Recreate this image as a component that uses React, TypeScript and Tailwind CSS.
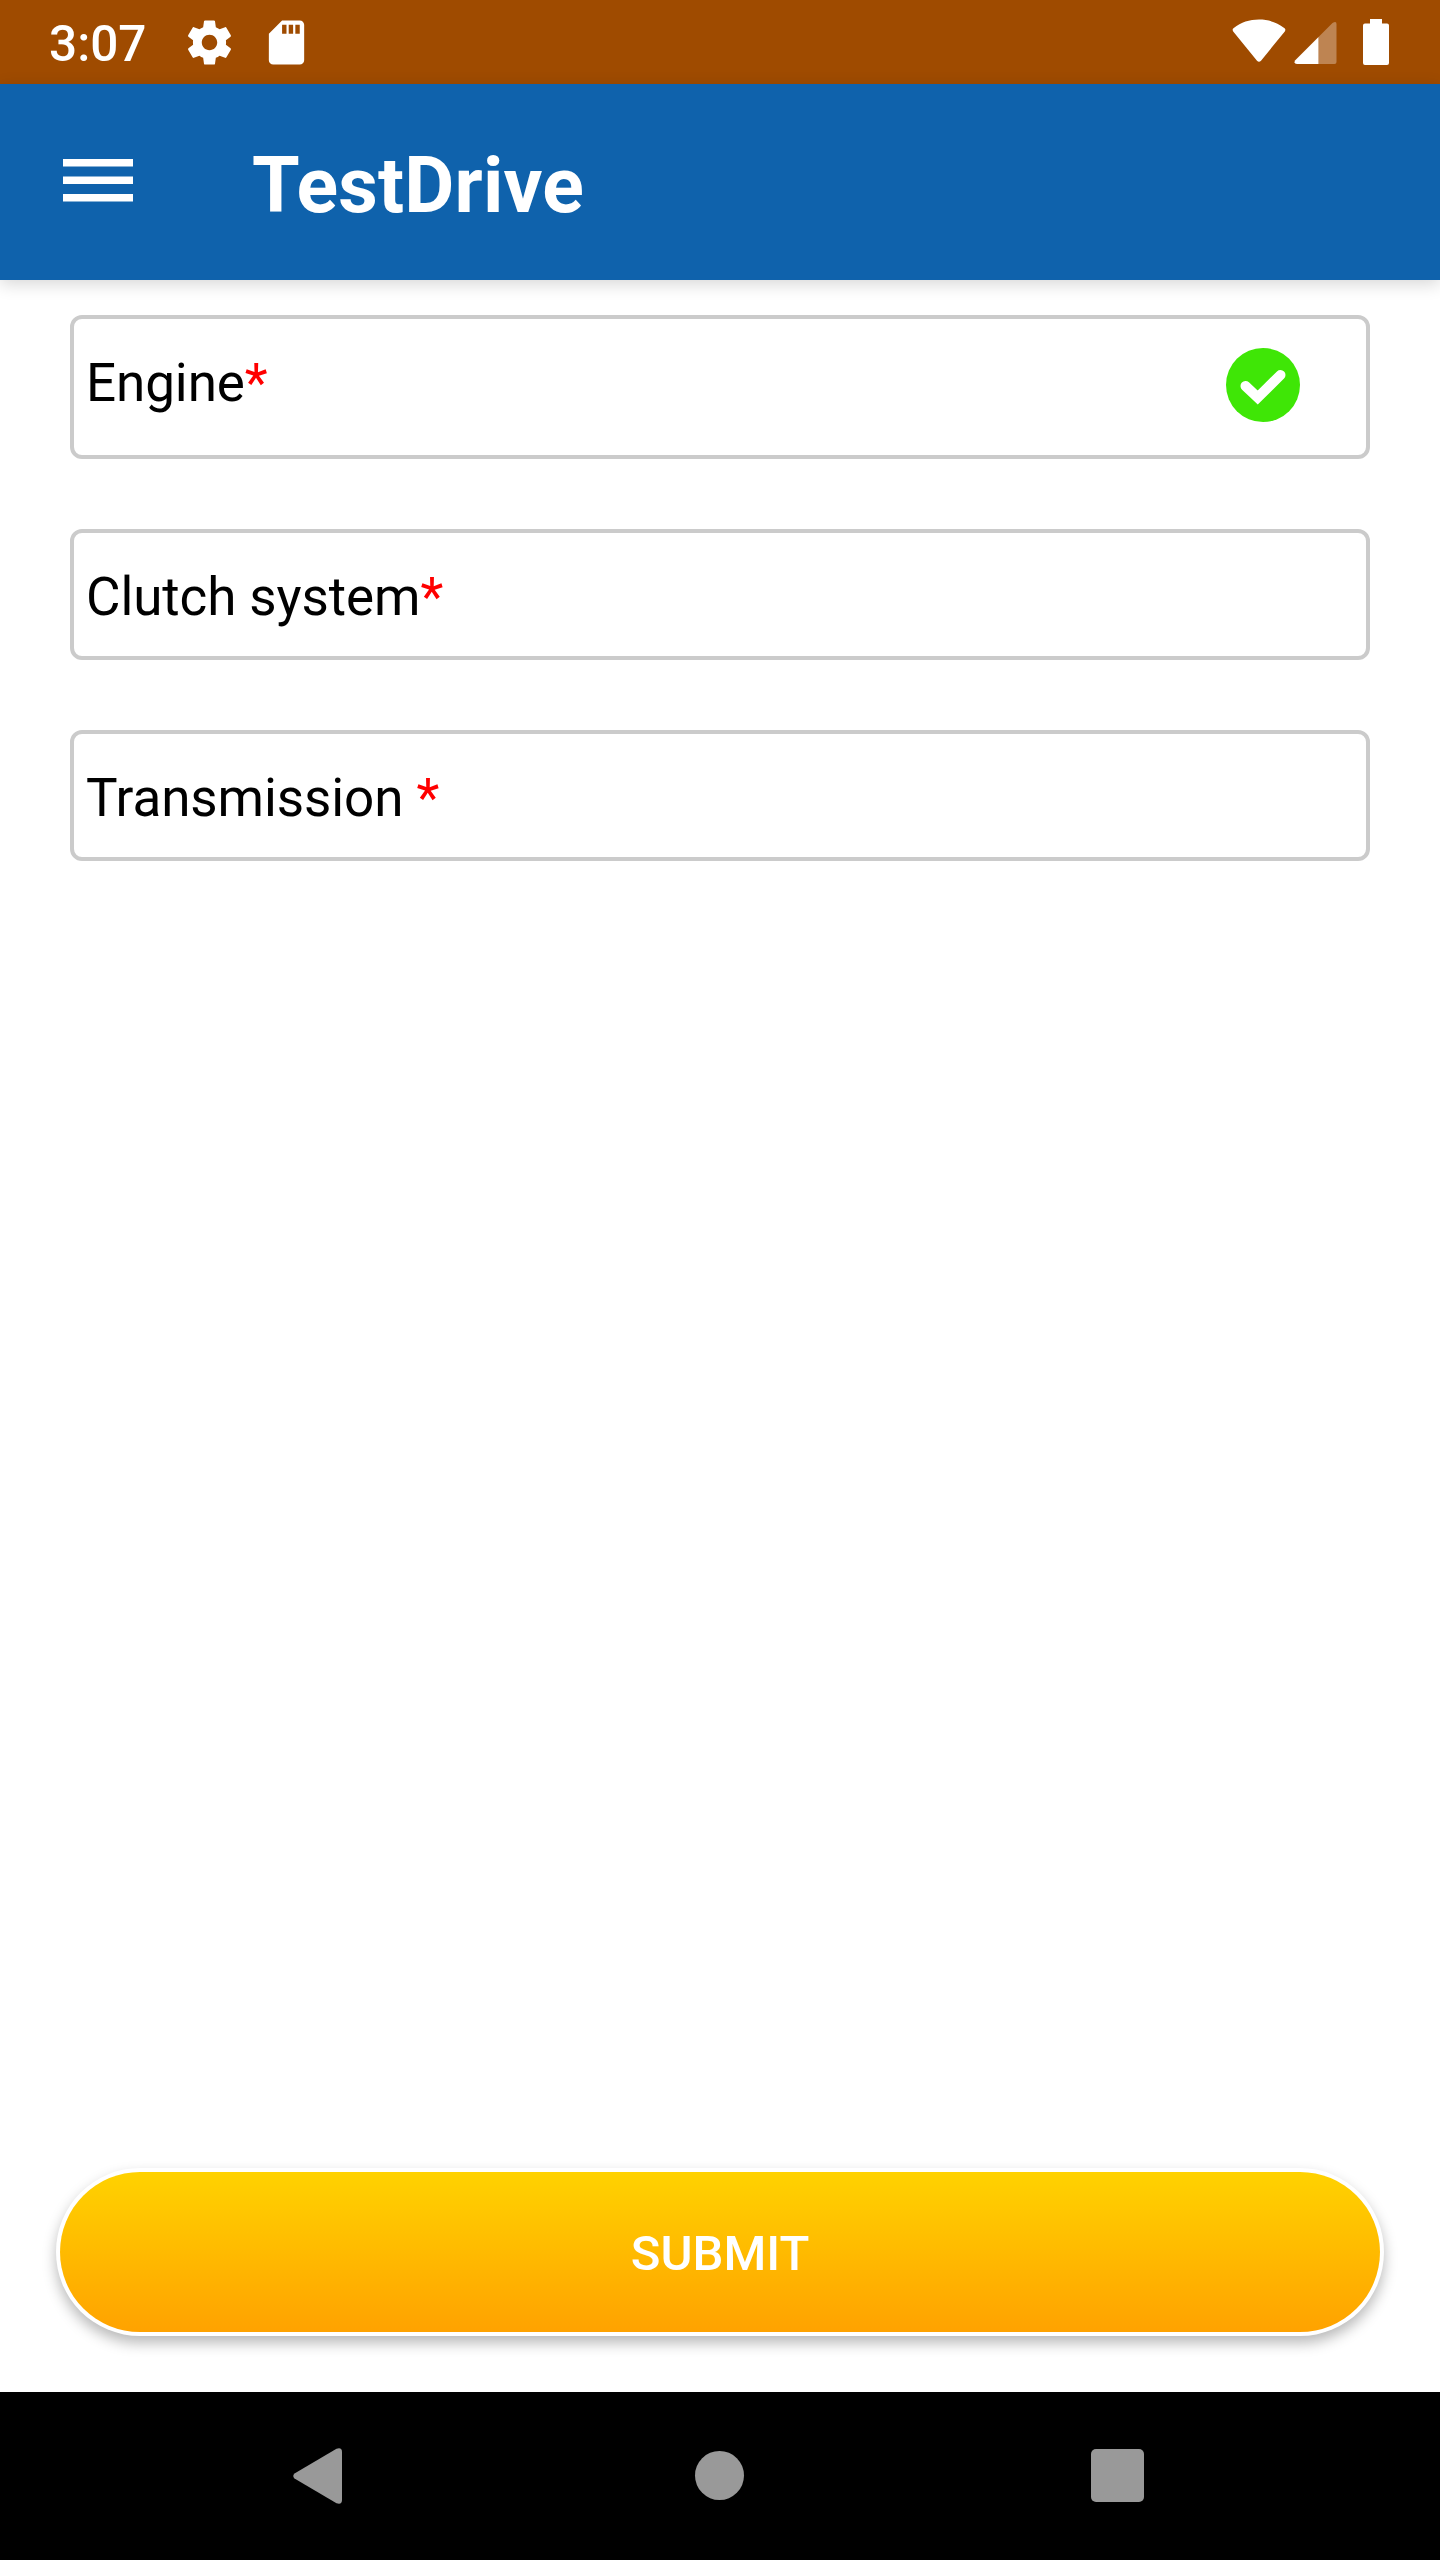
import type { ReactNode } from "react";

function StatusBar() {
  return (
    <header className="flex h-[84px] shrink-0 items-center bg-[#9f4b00] pl-[49px] pr-[51px] text-white">
      <span className="mt-[3px] w-[134px] text-[49.5px] leading-[50px] font-medium">3:07</span>
      <svg className="size-[53px]" viewBox="0 0 24 24" fill="currentColor">
        <path d="M19.43 12.98c.04-.32.07-.64.07-.98s-.03-.66-.07-.98l2.11-1.65c.19-.15.24-.42.12-.64l-2-3.46c-.12-.22-.39-.3-.61-.22l-2.49 1c-.52-.4-1.08-.73-1.69-.98l-.38-2.65C14.46 2.18 14.25 2 14 2h-4c-.25 0-.46.18-.49.42l-.38 2.65c-.61.25-1.17.59-1.69.98l-2.49-1c-.23-.09-.49 0-.61.22l-2 3.46c-.13.22-.07.49.12.64l2.11 1.65c-.04.32-.07.65-.07.98s.03.66.07.98l-2.11 1.65c-.19.15-.24.42-.12.64l2 3.46c.12.22.39.3.61.22l2.49-1c.52.4 1.08.73 1.69.98l.38 2.65c.03.24.24.42.49.42h4c.25 0 .46-.18.49-.42l.38-2.65c.61-.25 1.17-.59 1.69-.98l2.49 1c.23.09.49 0 .61-.22l2-3.46c.12-.22.07-.49-.12-.64l-2.11-1.65zM12 15.5c-1.93 0-3.5-1.57-3.5-3.5s1.57-3.5 3.5-3.5 3.5 1.57 3.5 3.5-1.57 3.5-3.5 3.5z" />
      </svg>
      <svg className="ml-[24px] size-[53px]" viewBox="0 0 24 24" fill="currentColor">
        <path d="M18 2h-8L4.02 8 4 20c0 1.1.9 2 2 2h12c1.1 0 2-.9 2-2V4c0-1.1-.9-2-2-2zm-6 6h-2V4h2v4zm3 0h-2V4h2v4zm3 0h-2V4h2v4z" />
      </svg>
      <svg className="ml-auto h-[46px] w-[54px]" viewBox="0 0 54 46" fill="currentColor">
        <path d="M1.2 12.4Q-.2 10.4 1.8 9C9 3.300 17.500.6 27 .6S45 3.300 52.200 9Q54.200 10.400 52.800 12.400L29 41.700Q27 43.700 25 41.700Z" />
      </svg>
      <svg className="ml-[8px] h-[46px] w-[43px]" viewBox="0 0 43 46" fill="currentColor">
        <path d="M24.500 18 1 41.500Q-.5 45 3 45H24.500Z" />
        <path d="M24.500 18 38.500 4Q42.500 1.500 42.500 5V43Q42.500 45 40.500 45H24.500Z" opacity=".32" />
      </svg>
      <svg className="ml-[26px] h-[46px] w-[26px]" viewBox="0 0 26 46" fill="currentColor">
        <path d="M7 0H19V4.500H24Q26 4.500 26 6.500V44Q26 46 24 46H2Q0 46 0 44V6.500Q0 4.500 2 4.500H7Z" />
      </svg>
    </header>
  );
}

function AppBar() {
  return (
    <div className="flex h-[196px] shrink-0 items-center bg-[#0f62ac] pl-[63px] text-white shadow-[0_4px_16px_rgba(0,0,0,0.16)]">
      <button className="block" aria-label="Menu">
        <svg className="mb-[3px] h-[43px] w-[70px]" viewBox="0 0 70 43" fill="currentColor">
          <path d="M0 0H70V7.500H0ZM0 17.500H70V25H0ZM0 35H70V42.500H0Z" />
        </svg>
      </button>
      <h1 className="mt-[7px] ml-[119px] text-[77px] leading-[90px] font-bold tracking-[0.2px]">TestDrive</h1>
    </div>
  );
}

function Field({ label, tall, children }: { label: string; tall?: boolean; children?: ReactNode }) {
  return (
    <div
      className={`flex items-start justify-between rounded-[12px] border-4 border-[#cbcbcb] pl-[12px] pr-[66px] ${
        tall ? "h-[144px]" : "h-[131px]"
      }`}
    >
      <span className="mt-[33px] text-[53px] leading-[62px] tracking-[-0.1px] whitespace-pre text-black">
        {label}
        <span className="text-[#ff0000]">*</span>
      </span>
      {children}
    </div>
  );
}

function NavBar() {
  return (
    <nav className="flex h-[168px] shrink-0 items-center bg-black pb-[1px] pl-[293px] text-[#999999]">
      <svg className="h-[56px] w-[49px]" viewBox="0 0 49 56" fill="currentColor">
        <path d="M1.500 25.500 43.500 .8Q49-1 49 4V52Q49 57 43.500 55.200L1.500 30.500Q-1 28 1.500 25.500Z" />
      </svg>
      <span className="ml-[353px] size-[49px] rounded-full bg-[#999999]" />
      <span className="ml-[347px] size-[53px] rounded-[5px] bg-[#999999]" />
    </nav>
  );
}

export default function App() {
  return (
    <div className="flex h-[2560px] w-[1440px] flex-col overflow-hidden bg-white font-['Roboto',sans-serif]">
      <StatusBar />
      <AppBar />
      <main className="flex flex-1 flex-col">
        <div className="flex flex-col gap-[70px] px-[70px] pt-[35px]">
          <Field label="Engine" tall>
            <svg className="mt-[29px] size-[74px]" viewBox="0 0 74 74">
              <circle cx="37" cy="37" r="37" fill="#3fe606" />
              <path
                d="M19.500 38 31.700 49.500 54.500 27"
                fill="none"
                stroke="#fff"
                strokeWidth="10"
                strokeLinecap="round"
              />
            </svg>
          </Field>
          <Field label="Clutch system" />
          <Field label="Transmission " />
        </div>
        <button className="mx-[56px] mt-auto mb-[56px] h-[168px] rounded-full bg-white p-[4px] shadow-[0_7px_14px_rgba(0,0,0,0.28)]">
          <span className="flex h-full items-center justify-center rounded-full bg-linear-to-b from-[#ffd200] to-[#ffa200] pt-[4px] text-[49px] leading-[58px] font-medium text-white">
            SUBMIT
          </span>
        </button>
      </main>
      <NavBar />
    </div>
  );
}
